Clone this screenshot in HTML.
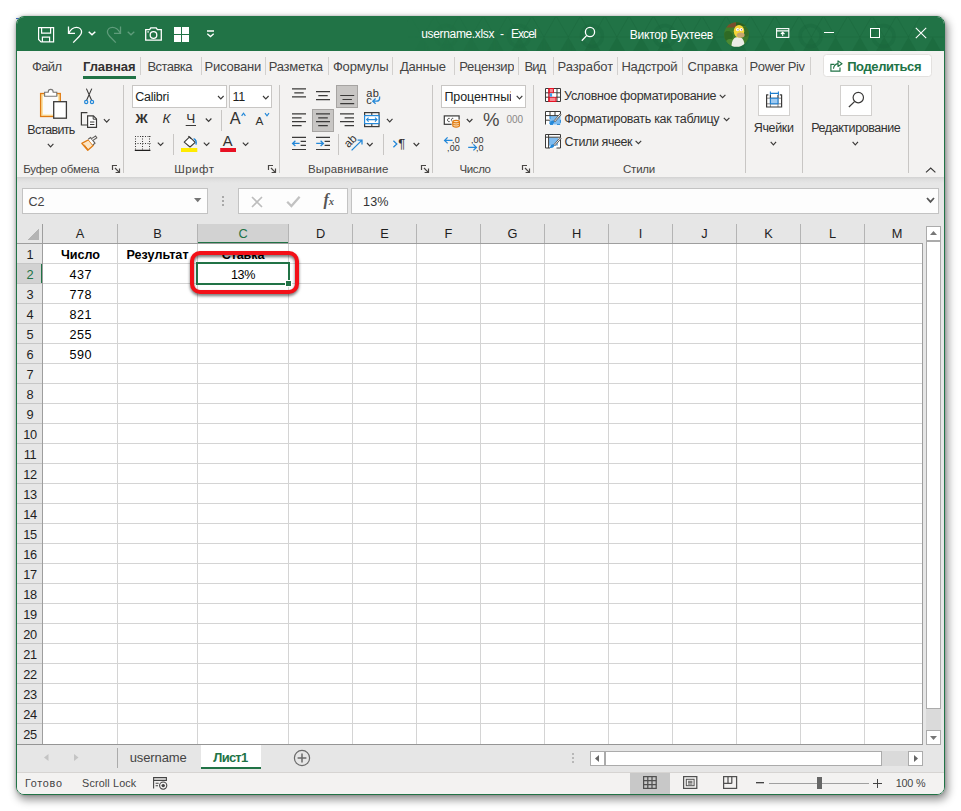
<!DOCTYPE html>
<html lang="ru">
<head>
<meta charset="utf-8">
<title>username.xlsx - Excel</title>
<style>
html,body{margin:0;padding:0;background:#fff;}
body{width:961px;height:811px;overflow:hidden;position:relative;font-family:"Liberation Sans",sans-serif;font-size:12px;color:#262626;}
#shadow{position:absolute;left:16px;top:16px;width:929px;height:779px;border-radius:8px;box-shadow:2px 4px 9px 1px rgba(0,0,0,.42), 0 0 3px rgba(0,0,0,.25);}
#win{position:absolute;left:16px;top:16px;width:929px;height:779px;box-sizing:border-box;border:1px solid #217346;border-radius:8px;overflow:hidden;background:#e6e6e6;}
#c{position:absolute;left:-17px;top:-17px;width:961px;height:811px;}
#c div,#c span,#c svg{position:absolute;}
.t{white-space:nowrap;line-height:16px;height:16px;}
/* title bar */
#title{left:16px;top:16px;width:929px;height:35px;background:#217346;}
/* tab row + ribbon */
#tabs{left:16px;top:51px;width:929px;height:29px;background:#f3f2f1;}
#ribbon{left:16px;top:80px;width:929px;height:97px;background:#f3f2f1;}
#ribshadow{left:16px;top:177px;width:929px;height:6px;background:linear-gradient(#d2d2d2,#dedede 40%,#e6e6e6);}
.tsep{width:1px;height:18px;top:57.3px;background:#d2d0ce;}
.gsep{width:1px;top:85px;height:88px;background:#c8c6c4;}
.ch,.rh{text-align:center;font-size:12.8px;height:16px;line-height:16px;}
.rh{letter-spacing:-0.4px;text-indent:0.8px;}
</style>
</head>
<body>
<div id="shadow"></div>
<div id="speck" style="position:absolute;left:16px;top:18px;width:3px;height:1px;background:#3a63b8;"></div>
<div id="win"><div id="c">

<!-- TITLE BAR -->
<div id="title"></div>
<!-- subtle pattern -->
<svg style="left:16px;top:16px;" width="929" height="35" viewBox="16 16 929 35">
<defs><linearGradient id="fd" x1="0" x2="1" y1="0" y2="0"><stop offset="0.42" stop-color="#fff" stop-opacity="0"/><stop offset="0.62" stop-color="#fff" stop-opacity="1"/></linearGradient><mask id="mk"><rect x="16" y="16" width="929" height="35" fill="url(#fd)"/></mask></defs>
<g mask="url(#mk)">
<path d="M908.5 37L920.6 58H896.4ZM884.2 37L896.4 58H872.1ZM859.9 37L872.0 58H847.8ZM835.6 37L847.8 58H823.5ZM811.3 37L823.4 58H799.1ZM787.0 37L799.1 58H774.9ZM762.7 37L774.9 58H750.6ZM738.4 37L750.5 58H726.2ZM714.1 37L726.2 58H702.0ZM689.8 37L701.9 58H677.6ZM665.5 37L677.6 58H653.4ZM641.2 37L653.4 58H629.1ZM616.9 37L629.0 58H604.8ZM592.6 37L604.7 58H580.4ZM568.3 37L580.4 58H556.1ZM544.0 37L556.1 58H531.9ZM519.7 37L531.9 58H507.6ZM495.4 37L507.5 58H483.2ZM471.1 37L483.2 58H458.9ZM446.8 37L458.9 58H434.7ZM422.5 37L434.6 58H410.4ZM398.2 37L410.3 58H386.1ZM932.8 37L945.0 58H920.6Z" fill="#1a663b" opacity=".55"/>
<path d="M908.5 37L896.4 16M908.5 37L920.6 16M884.2 37L872.1 16M884.2 37L896.4 16M859.9 37L847.8 16M859.9 37L872.0 16M835.6 37L823.5 16M835.6 37L847.8 16M811.3 37L799.1 16M811.3 37L823.4 16M787.0 37L774.9 16M787.0 37L799.1 16M762.7 37L750.6 16M762.7 37L774.9 16M738.4 37L726.2 16M738.4 37L750.5 16M714.1 37L702.0 16M714.1 37L726.2 16M689.8 37L677.6 16M689.8 37L701.9 16M665.5 37L653.4 16M665.5 37L677.6 16M641.2 37L629.1 16M641.2 37L653.4 16M616.9 37L604.8 16M616.9 37L629.0 16M592.6 37L580.4 16M592.6 37L604.7 16M568.3 37L556.1 16M568.3 37L580.4 16M544.0 37L531.9 16M544.0 37L556.1 16M519.7 37L507.6 16M519.7 37L531.9 16M495.4 37L483.2 16M495.4 37L507.5 16M471.1 37L458.9 16M471.1 37L483.2 16M446.8 37L434.7 16M446.8 37L458.9 16M422.5 37L410.4 16M422.5 37L434.6 16M398.2 37L386.1 16M398.2 37L410.3 16M380 37H945" fill="none" stroke="#1a663b" stroke-width="1" opacity=".45"/>
<circle cx="883.5" cy="36" r="10.5" fill="none" stroke="#1a663b" stroke-width="3.5" opacity=".4"/>
<circle cx="810.6" cy="36" r="10.5" fill="none" stroke="#1a663b" stroke-width="3.5" opacity=".4"/>
<circle cx="737.7" cy="36" r="10.5" fill="none" stroke="#1a663b" stroke-width="3.5" opacity=".4"/>
<circle cx="664.8" cy="36" r="10.5" fill="none" stroke="#1a663b" stroke-width="3.5" opacity=".4"/>
<circle cx="591.9" cy="36" r="10.5" fill="none" stroke="#1a663b" stroke-width="3.5" opacity=".4"/>
<circle cx="519.0" cy="36" r="10.5" fill="none" stroke="#1a663b" stroke-width="3.5" opacity=".4"/>
<circle cx="446.1" cy="36" r="10.5" fill="none" stroke="#1a663b" stroke-width="3.5" opacity=".4"/>
</g></svg>
<!-- save -->
<svg style="left:38px;top:27px;" width="17" height="16" fill="none" stroke="#fff" stroke-width="1.2"><path d="M0.6 0.6H15.6V14.9H3L0.6 12.5Z"/><path d="M3.6 0.6V6.2H12.6V0.6"/><path d="M4.4 14.9V10.2H11.6V14.9"/></svg>
<!-- undo -->
<svg style="left:66px;top:25px;" width="18" height="19" fill="none" stroke="#fff" stroke-width="1.3"><path d="M2.5 1.5V8.3H9"/><path d="M2.7 8.1C4.5 4.8 7.5 2.4 10.5 2.4C14 2.4 15.6 4.8 15.6 7C15.6 9 14.5 10.2 13.2 11.5L7.2 17.6"/></svg>
<svg style="left:88px;top:31px;" width="8" height="5" fill="none" stroke="#fff" stroke-width="1.5"><path d="M0.7 0.8L4 3.8L7.3 0.8"/></svg>
<!-- redo (dim) -->
<svg style="left:105px;top:25px;" width="18" height="19" fill="none" stroke="#5f9c7b" stroke-width="1.3"><path d="M15.5 1.5V8.3H9"/><path d="M15.3 8.1C13.5 4.8 10.5 2.4 7.5 2.4C4 2.4 2.4 4.8 2.4 7C2.4 9 3.5 10.2 4.8 11.5L10.8 17.6"/></svg>
<svg style="left:127px;top:31px;" width="8" height="5" fill="none" stroke="#5f9c7b" stroke-width="1.3"><path d="M0.7 0.8L4 3.8L7.3 0.8"/></svg>
<!-- camera -->
<svg style="left:145px;top:27px;" width="17" height="14" fill="none" stroke="#fff" stroke-width="1.3"><path d="M0.7 2.6H4.6L5.8 0.8H11.2L12.4 2.6H16.3V13.2H0.7Z"/><circle cx="8.5" cy="8" r="3.3"/><rect x="2.4" y="4.2" width="1.4" height="1.4" fill="#fff" stroke="none"/></svg>
<!-- four squares -->
<svg style="left:174px;top:27px;" width="16" height="15" fill="#fff" shape-rendering="crispEdges"><rect x="0" y="0" width="7" height="7"/><rect x="8" y="0" width="7" height="7"/><rect x="0" y="8" width="7" height="7"/><rect x="8" y="8" width="7" height="7"/></svg>
<!-- customize -->
<svg style="left:206px;top:30px;" width="9" height="8" fill="none" stroke="#fff" stroke-width="1.3"><path d="M1 1H8"/><path d="M1.3 3.8L4.5 6.6L7.7 3.8"/></svg>
<span class="t" style="left:421.3px;top:26px;font-size:12px;color:#fff;letter-spacing:-0.35px;">username.xlsx</span>
<span class="t" style="left:500.1px;top:26px;font-size:12px;color:#fff;letter-spacing:0.8px;">-</span>
<span class="t" style="left:510.9px;top:26px;font-size:12px;color:#fff;letter-spacing:-0.89px;">Excel</span>
<!-- search -->
<svg style="left:581px;top:25.5px;" width="15" height="16" fill="none" stroke="#fff" stroke-width="1.3"><circle cx="9" cy="6" r="4.6"/><path d="M5.8 9.4L0.8 14.8"/></svg>
<span class="t" style="left:629.8px;top:26.5px;font-size:12px;color:#fff;letter-spacing:-0.25px;">Виктор Бухтеев</span>
<!-- avatar -->
<svg style="left:724px;top:21.6px;" width="25" height="25" viewBox="0 0 25 25"><defs><clipPath id="av"><circle cx="12.5" cy="12.5" r="12.3"/></clipPath></defs><g clip-path="url(#av)"><rect width="25" height="25" fill="#3f7d2c"/><circle cx="4" cy="14" r="5" fill="#2f6a24"/><circle cx="21" cy="10" r="5" fill="#356f27"/><circle cx="6" cy="21" r="4" fill="#4c8a33"/><rect x="2" y="0" width="10" height="5.5" fill="#7b4d2c"/><rect x="12" y="0" width="12" height="4" fill="#2c5f22"/><path d="M7.5 25C7.5 18 10 15 14 15C18.5 15 20.5 18 20.5 25Z" fill="#ecece6"/><ellipse cx="15" cy="9.2" rx="5.2" ry="6.3" fill="#f6d437"/><ellipse cx="16.6" cy="13" rx="4" ry="2.6" fill="#c8a56f"/><circle cx="13.6" cy="7.6" r="1.7" fill="#fff"/><circle cx="17.2" cy="7.6" r="1.7" fill="#fff"/><circle cx="14" cy="7.8" r=".5" fill="#222"/><circle cx="17.6" cy="7.8" r=".5" fill="#222"/></g></svg>
<!-- ribbon display -->
<svg style="left:776px;top:28px;" width="14" height="11" fill="none" stroke="#fff" stroke-width="1.1"><rect x="0.6" y="0.6" width="12.2" height="8.8"/><path d="M0.6 2.9H12.8"/><path d="M6.7 8V4.4M4.9 6L6.7 4.2L8.5 6"/></svg>
<!-- min / max / close -->
<div style="left:824px;top:32px;width:10px;height:1px;background:#fff;"></div>
<div style="left:870px;top:28px;width:10px;height:10px;box-sizing:border-box;border:1px solid #fff;"></div>
<svg style="left:915px;top:27px;" width="12" height="12" fill="none" stroke="#fff" stroke-width="1.1"><path d="M0.8 0.8L11.2 11.2M11.2 0.8L0.8 11.2"/></svg>

<!-- /TITLE BAR -->

<!-- TABS -->
<div id="tabs"></div>
<div style="left:83px;top:76px;width:53px;height:3px;background:#217346;"></div>
<div class="tsep" style="left:140px;"></div>
<div class="tsep" style="left:201px;"></div>
<div class="tsep" style="left:265px;"></div>
<div class="tsep" style="left:328px;"></div>
<div class="tsep" style="left:392px;"></div>
<div class="tsep" style="left:454px;"></div>
<div class="tsep" style="left:518px;"></div>
<div class="tsep" style="left:553px;"></div>
<div class="tsep" style="left:617px;"></div>
<div class="tsep" style="left:682px;"></div>
<div class="tsep" style="left:745px;"></div>
<div class="tsep" style="left:810px;"></div>
<div style="left:823px;top:54.4px;width:108.6px;height:23px;box-sizing:border-box;background:#fff;border:1px solid #e3e1df;border-radius:3.5px;"></div>
<svg style="left:830px;top:60px;" width="14" height="13" fill="none" stroke="#217346" stroke-width="1.15"><path d="M4.4 4.3H0.9V11.1H10V7.6"/><path d="M3.5 8.8C3.7 5.8 5.4 3.9 8.2 3.6"/><path d="M8 0.9L12 3.7L8 6.5Z" stroke-linejoin="round"/></svg>
<span class="t" style="left:32.0px;top:59px;font-size:13px;color:#444444;letter-spacing:-0.62px;">Файл</span>
<span class="t" style="left:83.0px;top:59px;font-size:13px;font-weight:bold;color:#323130;letter-spacing:-0.06px;">Главная</span>
<span class="t" style="left:147.5px;top:59px;font-size:13px;color:#444444;letter-spacing:-0.55px;">Вставка</span>
<span class="t" style="left:204.5px;top:59px;font-size:13px;color:#444444;letter-spacing:-0.21px;width:56.5px;overflow:hidden;">Рисование</span>
<span class="t" style="left:268.8px;top:59px;font-size:13px;color:#444444;letter-spacing:-0.27px;">Разметка</span>
<span class="t" style="left:332.9px;top:59px;font-size:13px;color:#444444;letter-spacing:-0.16px;">Формулы</span>
<span class="t" style="left:399.9px;top:59px;font-size:13px;color:#444444;letter-spacing:-0.17px;">Данные</span>
<span class="t" style="left:459.2px;top:59px;font-size:13px;color:#444444;letter-spacing:-0.31px;width:55px;overflow:hidden;">Рецензирование</span>
<span class="t" style="left:524.5px;top:59px;font-size:13px;color:#444444;letter-spacing:-0.92px;">Вид</span>
<span class="t" style="left:557.5px;top:59px;font-size:13px;color:#444444;letter-spacing:-0.06px;width:55.5px;overflow:hidden;">Разработчик</span>
<span class="t" style="left:621.5px;top:59px;font-size:13px;color:#444444;letter-spacing:-0.34px;width:56px;overflow:hidden;">Надстройки</span>
<span class="t" style="left:687.5px;top:59px;font-size:13px;color:#444444;letter-spacing:-0.07px;">Справка</span>
<span class="t" style="left:749.5px;top:59px;font-size:13px;color:#444444;letter-spacing:-0.37px;width:55.5px;overflow:hidden;">Power Pivot</span>
<span class="t" style="left:847.2px;top:59px;font-size:13px;font-weight:bold;color:#217346;letter-spacing:-0.41px;">Поделиться</span>
<!-- /TABS -->

<!-- RIBBON -->
<div id="ribbon"></div>
<div id="ribshadow"></div>
<div class="gsep" style="left:123px;"></div>
<div class="gsep" style="left:279px;"></div>
<div class="gsep" style="left:432px;"></div>
<div class="gsep" style="left:533px;"></div>
<div class="gsep" style="left:745px;"></div>
<div class="gsep" style="left:802px;"></div>
<div class="gsep" style="left:908px;"></div>
<svg style="left:0;top:0;" width="961" height="200"><rect x="40.6" y="93.5" width="19.7" height="23" fill="#fbe2a6" stroke="#e07b12" stroke-width="1.3"/><rect x="43" y="96" width="15" height="18.5" fill="#fbfbfb"/><path d="M44.6 96.3V92.2H48.2C48.2 88.4 53.2 88.4 53.2 92.2H56.8V96.3Z" fill="#fff" stroke="#797775" stroke-width="1.1"/><rect x="53.7" y="101.7" width="12.7" height="16.5" fill="#fff" stroke="#3b3a39" stroke-width="1.3"/><path d="M47.8 143.9L50.6 146.8L53.4 143.9" fill="none" stroke="#3b3a39" stroke-width="1.15"/><path d="M86.4 88.6L91.6 100.2M91.8 88.6L86.6 100.2" stroke="#3b3a39" stroke-width="1.1" fill="none"/><circle cx="86.2" cy="102" r="1.6" fill="none" stroke="#2488d8" stroke-width="1.2"/><circle cx="92" cy="102" r="1.6" fill="none" stroke="#2488d8" stroke-width="1.2"/><path d="M87.4 112.6H81.4V125H87" fill="none" stroke="#3b3a39" stroke-width="1.2"/><path d="M87.6 115.8H93.4L96.5 118.9V127.4H87.6Z" fill="#fff" stroke="#3b3a39" stroke-width="1.2"/><path d="M93.2 116V119.2H96.3M90 122H94.4M90 124.5H94.4" fill="none" stroke="#3b3a39" stroke-width="1"/><path d="M103.9 119.2L106.7 122.2L109.5 119.2" fill="none" stroke="#3b3a39" stroke-width="1.15"/><path d="M81.8 143.4L88.6 139.8L93.2 145.6L87.8 150.2Z" fill="#fde6c6" stroke="#e07b12" stroke-width="1.3" stroke-linejoin="round"/><path d="M84 144.5L88 149.5" stroke="#e07b12" stroke-width="1"/><path d="M88.2 139.2L90.6 137.6L95 143.2L92.8 145" fill="#fff" stroke="#605e5c" stroke-width="1.1"/><path d="M91.6 138.6L95.6 136L96.8 137.8L93 140.4" fill="#fff" stroke="#605e5c" stroke-width="1.1"/><path d="M112.5 170V165.5H117" fill="none" stroke="#484644" stroke-width="1.2"/><path d="M115 168L119.3 172.3M119.5 168.6V172.5H115.6" fill="none" stroke="#484644" stroke-width="1.2"/><rect x="132.5" y="85.5" width="94" height="22" fill="#fff" stroke="#c8c6c4" stroke-width="1"/><rect x="229.5" y="85.5" width="42" height="22" fill="#fff" stroke="#c8c6c4" stroke-width="1"/><path d="M218.0 96.0L220.8 98.9L223.6 96.0" fill="none" stroke="#3b3a39" stroke-width="1.15"/><path d="M263.0 96.0L265.8 98.9L268.6 96.0" fill="none" stroke="#3b3a39" stroke-width="1.15"/><path d="M185.7 125.5H196" stroke="#3b3a39" stroke-width="1.1"/><path d="M205.8 118.5L208.6 121.5L211.4 118.5" fill="none" stroke="#3b3a39" stroke-width="1.15"/><rect x="221" y="110" width="1" height="21" fill="#c8c6c4"/><path d="M241.6 115.8L243.5 113.2L245.4 115.8" fill="none" stroke="#2488d8" stroke-width="1.2"/><path d="M265 113.2L267 115.8L269 113.2" fill="none" stroke="#2488d8" stroke-width="1.2"/><g stroke="#3b3a39" stroke-width="1" stroke-dasharray="1 1.5" fill="none"><path d="M135 136.5H150.5M135 143.5H150.5M135.5 136V150M142.5 136V150M149.5 136V150"/></g><path d="M134.8 150.4H150.4" stroke="#201f1e" stroke-width="1.4"/><path d="M157.8 142.6L160.6 145.5L163.4 142.6" fill="none" stroke="#3b3a39" stroke-width="1.15"/><rect x="173" y="134" width="1" height="21" fill="#c8c6c4"/><path d="M184.2 142.2L189.6 136.8L195.2 142.4L190 147Z" fill="#fff" stroke="#3b3a39" stroke-width="1.1" stroke-linejoin="round"/><path d="M188.4 136.2L190.8 138.6" stroke="#3b3a39" stroke-width="1.1"/><path d="M193.6 138.6C195.8 139.6 196.6 142 196 144.6" fill="none" stroke="#2488d8" stroke-width="1.4"/><rect x="181" y="148" width="16.3" height="4" fill="#ffeb00"/><path d="M203.8 142.6L206.6 145.5L209.4 142.6" fill="none" stroke="#3b3a39" stroke-width="1.15"/><rect x="220.2" y="148" width="15.8" height="4" fill="#e81123"/><path d="M242.8 142.6L245.6 145.5L248.4 142.6" fill="none" stroke="#3b3a39" stroke-width="1.15"/><path d="M268.5 170V165.5H273" fill="none" stroke="#484644" stroke-width="1.2"/><path d="M271 168L275.3 172.3M275.5 168.6V172.5H271.6" fill="none" stroke="#484644" stroke-width="1.2"/></svg>
<span class="t" style="left:27.3px;top:122px;font-size:12.5px;color:#323130;letter-spacing:-0.73px;">Вставить</span>
<span class="t" style="left:23.2px;top:161px;font-size:11.5px;color:#484644;letter-spacing:-0.17px;">Буфер обмена</span>
<span class="t" style="left:174.2px;top:161px;font-size:11.5px;color:#484644;letter-spacing:0.48px;">Шрифт</span>
<span class="t" style="left:135.3px;top:89px;font-size:12.5px;color:#201f1e;letter-spacing:-0.24px;">Calibri</span>
<span class="t" style="left:232.4px;top:89px;font-size:12.5px;color:#201f1e;letter-spacing:-0.28px;">11</span>
<span class="t" style="left:135.5px;top:110.5px;font-size:13.5px;font-weight:bold;color:#323130;letter-spacing:3.0px;">Ж</span>
<span class="t" style="left:162.4px;top:110.5px;font-size:13.5px;font-style:italic;color:#323130;letter-spacing:1.13px;">К</span>
<span class="t" style="left:186.3px;top:110.5px;font-size:13.5px;color:#323130;letter-spacing:0.4px;">Ч</span>
<span class="t" style="left:229.7px;top:109.5px;font-size:16.3px;color:#323130;letter-spacing:1.23px;">A</span>
<span class="t" style="left:255.5px;top:113px;font-size:11.8px;color:#323130;letter-spacing:1.82px;">A</span>
<span class="t" style="left:222.7px;top:133px;font-size:14.7px;color:#323130;letter-spacing:1.2px;">A</span>
<!-- /RIBBON -->
<!-- RIB2 -->
<svg style="left:0;top:0;" width="961" height="200"><rect x="336.5" y="85.5" width="21" height="22" fill="#c8c6c4" stroke="#a6a4a2" stroke-width="1"/><rect x="312.5" y="109.5" width="21" height="22" fill="#c8c6c4" stroke="#a6a4a2" stroke-width="1"/><path d="M292.0 88.9H306.0M294.3 92.9H303.7M292.0 96.9H306.0" stroke="#3b3a39" stroke-width="1.2" fill="none"/><path d="M316.0 91.7H330.0M318.3 95.7H327.7M316.0 99.7H330.0" stroke="#3b3a39" stroke-width="1.2" fill="none"/><path d="M340.2 95.5H354.2M342.5 99.5H351.9M340.2 103.6H354.2" stroke="#3b3a39" stroke-width="1.2" fill="none"/><path d="M379.6 96.6V98.2C379.6 100.4 378.4 101.2 376.6 101.2H373.2M375.6 98.6L372.8 101.2L375.6 103.8" fill="none" stroke="#2488d8" stroke-width="1.3"/><path d="M292.0 113.8H306.0M292.0 117.8H301.6M292.0 121.7H306.0M292.0 125.7H301.6" stroke="#3b3a39" stroke-width="1.2" fill="none"/><path d="M316.0 113.8H330.0M318.2 117.8H327.8M316.0 121.7H330.0M318.2 125.7H327.8" stroke="#3b3a39" stroke-width="1.2" fill="none"/><path d="M340.0 113.8H354.0M344.6 117.8H354.0M340.0 121.7H354.0M344.6 125.7H354.0" stroke="#3b3a39" stroke-width="1.2" fill="none"/><rect x="364.6" y="112.6" width="14.4" height="14" fill="none" stroke="#3b3a39" stroke-width="1.2"/><path d="M371.8 112.6V115.4M371.8 123.8V126.6" stroke="#3b3a39" stroke-width="1.1"/><rect x="364.6" y="115.6" width="14.4" height="8" fill="#fff" stroke="#2488d8" stroke-width="1.2"/><path d="M366.6 119.6H377M368.6 117.6L366.6 119.6L368.6 121.6M375 117.6L377 119.6L375 121.6" fill="none" stroke="#2488d8" stroke-width="1.1"/><path d="M386.9 118.8L389.7 121.8L392.5 118.8" fill="none" stroke="#3b3a39" stroke-width="1.15"/><path d="M292.0 137.4H306.0M300.6 141.4H306.0M300.6 145.4H306.0M292.0 149.5H306.0" stroke="#3b3a39" stroke-width="1.2" fill="none"/><path d="M292.6 143.4H299.6M295.4 140.8L292.6 143.4L295.4 146" fill="none" stroke="#2488d8" stroke-width="1.3"/><path d="M316.0 137.4H330.0M324.6 141.4H330.0M324.6 145.4H330.0M316.0 149.5H330.0" stroke="#3b3a39" stroke-width="1.2" fill="none"/><path d="M316.2 143.4H323.4M320.6 140.8L323.4 143.4L320.6 146" fill="none" stroke="#2488d8" stroke-width="1.3"/><rect x="338" y="134" width="1" height="21" fill="#c8c6c4"/><path d="M351.6 150.4L361.8 140.4M357.6 140.2H362V144.6" fill="none" stroke="#2488d8" stroke-width="1.3"/><path d="M367.0 143.0L369.8 145.9L372.6 143.0" fill="none" stroke="#3b3a39" stroke-width="1.15"/><rect x="383" y="134" width="1" height="21" fill="#c8c6c4"/><path d="M393.4 140.8L396.8 144L393.4 147.2" fill="none" stroke="#2488d8" stroke-width="1.3"/><path d="M413.6 143.0L416.4 145.9L419.2 143.0" fill="none" stroke="#3b3a39" stroke-width="1.15"/><path d="M421.5 170V165.5H426" fill="none" stroke="#484644" stroke-width="1.2"/><path d="M424 168L428.3 172.3M428.5 168.6V172.5H424.6" fill="none" stroke="#484644" stroke-width="1.2"/><rect x="441.5" y="85.5" width="84" height="22" fill="#fff" stroke="#c8c6c4" stroke-width="1"/><path d="M516.7 95.8L519.5 98.8L522.3 95.8" fill="none" stroke="#3b3a39" stroke-width="1.15"/><rect x="444.3" y="115.9" width="14.8" height="8.4" fill="#fff" stroke="#3b3a39" stroke-width="1.2"/><path d="M449.6 118.4C447.2 117.6 446.6 122.2 449.6 121.6M453.2 118.4C451 117.6 450.6 122.2 453.2 121.6" fill="none" stroke="#3b3a39" stroke-width="1"/><rect x="451.6" y="119.6" width="9" height="8.4" fill="#f3f2f1"/><path d="M452.8 121.8V125.6C452.8 127.6 459.4 127.6 459.4 125.6V121.8" fill="#fde6c6" stroke="#e07b12" stroke-width="1.2"/><ellipse cx="456.1" cy="121.6" rx="3.3" ry="1.3" fill="#fde6c6" stroke="#e07b12" stroke-width="1.2"/><path d="M452.8 123.8C453.4 125.4 458.8 125.4 459.4 123.8" fill="none" stroke="#e07b12" stroke-width="1"/><path d="M466.8 119.0L469.6 121.9L472.4 119.0" fill="none" stroke="#3b3a39" stroke-width="1.15"/><path d="M444.6 140.4H452.6M447.6 137.4L444.6 140.4L447.6 143.4" fill="none" stroke="#2488d8" stroke-width="1.3"/><path d="M468.2 147.4H476.4M473.4 144.4L476.4 147.4L473.4 150.4" fill="none" stroke="#2488d8" stroke-width="1.3"/><path d="M522.5 170V165.5H527" fill="none" stroke="#484644" stroke-width="1.2"/><path d="M525 168L529.3 172.3M529.5 168.6V172.5H525.6" fill="none" stroke="#484644" stroke-width="1.2"/></svg>
<span class="t" style="left:366.3px;top:85.3px;font-size:11px;color:#323130;letter-spacing:0.45px;">ab</span>
<span class="t" style="left:366.3px;top:92.3px;font-size:11px;color:#323130;letter-spacing:-0.1px;">c</span>
<span class="t" style="left:398.3px;top:135.8px;font-size:13px;color:#323130;letter-spacing:0.42px;">¶</span>
<span class="t" style="left:308.0px;top:161px;font-size:11.5px;color:#484644;letter-spacing:0.12px;">Выравнивание</span>
<span class="t" style="left:444.4px;top:89px;font-size:12.5px;color:#201f1e;letter-spacing:-0.08px;width:66.5px;overflow:hidden;">Процентный</span>
<span class="t" style="left:483.1px;top:111.5px;font-size:18.5px;color:#4a4846;letter-spacing:-0.45px;">%</span>
<span class="t" style="left:506.4px;top:111.8px;font-size:10px;color:#8a8886;letter-spacing:0.01px;">000</span>
<span class="t" style="left:452.1px;top:131.7px;font-size:9px;color:#323130;letter-spacing:0.08px;">,0</span>
<span class="t" style="left:447.1px;top:139.7px;font-size:9px;color:#323130;letter-spacing:0.04px;">,00</span>
<span class="t" style="left:470.9px;top:131.7px;font-size:9px;color:#323130;letter-spacing:0.04px;">,00</span>
<span class="t" style="left:476.1px;top:139.7px;font-size:9px;color:#323130;letter-spacing:-0.12px;">,0</span>
<span class="t" style="left:459.5px;top:161px;font-size:11.5px;color:#484644;letter-spacing:-0.39px;">Число</span>
<span class="t" style="left:344.4px;top:133.4px;font-size:11.5px;color:#323130;transform:rotate(-45deg);transform-origin:50% 50%;letter-spacing:-0.3px;">ab</span>
<!-- /RIB2 -->
<!-- RIB3 -->
<svg style="left:0;top:0;" width="961" height="200"><rect x="545.5" y="88.5" width="15" height="13" fill="#fff"/><path d="M545.5 88.5H560.5V101.5H545.5ZM545.5 92.8H560.5M545.5 97.2H560.5M549 88.5V101.5M553 88.5V101.5M557 88.5V101.5" fill="none" stroke="#3b3a39" stroke-width="1"/><rect x="549" y="88.5" width="4.4" height="4.3" fill="#f58a93" stroke="#e81123" stroke-width="1"/><rect x="549" y="97.2" width="7" height="4.3" fill="#f58a93" stroke="#e81123" stroke-width="1"/><rect x="549.5" y="93.3" width="6.5" height="3.4" fill="#fff"/><rect x="549.5" y="93.3" width="2.6" height="3.4" fill="#3d9be9"/><path d="M549 88.5V101.5" stroke="#e81123" stroke-width="1"/><rect x="545.5" y="111.5" width="15" height="13" fill="#fff"/><rect x="550" y="116" width="10.5" height="8.5" fill="#7fbcf0"/><path d="M545.5 124.5V111.5H560.5V114M545.5 115.6H560.5M545.5 120.2H550M550 111.5V116M555 111.5V116" fill="none" stroke="#3b3a39" stroke-width="1"/><path d="M550 116V124.4M550 124.4H553M557 124.4H560.4V118" fill="none" stroke="#2488d8" stroke-width="1" stroke-dasharray="3 2"/><path d="M550.2 123.0C551.4 120.19999999999999 553 120.0 554.4 121.19999999999999C554.4 123.6 552.2 124.6 549.4 124.0Z" fill="#2488d8"/><path d="M554 120.8L560 113.8L561 114.8L555 121.8Z" fill="#fff" stroke="#605e5c" stroke-width="1"/><rect x="545.5" y="134.5" width="15" height="13.5" fill="#fff"/><rect x="549" y="137.6" width="9" height="8" fill="#7fbcf0"/><path d="M545.5 148V134.5H560.5V148M545.5 137.2H560.5M548.6 134.5V148M545.5 148H550M556.5 148H560.5" fill="none" stroke="#3b3a39" stroke-width="1"/><path d="M550.2 146.8C551.4 144.0 553 143.8 554.4 145.0C554.4 147.4 552.2 148.4 549.4 147.8Z" fill="#2488d8"/><path d="M554 144.6L560 137.6L561 138.6L555 145.6Z" fill="#fff" stroke="#605e5c" stroke-width="1"/><path d="M719.8 94.8L722.6 97.7L725.4 94.8" fill="none" stroke="#3b3a39" stroke-width="1.15"/><path d="M723.8 117.8L726.6 120.7L729.4 117.8" fill="none" stroke="#3b3a39" stroke-width="1.15"/><path d="M635.6 140.8L638.4 143.7L641.2 140.8" fill="none" stroke="#3b3a39" stroke-width="1.15"/><rect x="758.5" y="85.5" width="31" height="30" fill="#fff" stroke="#d2d0ce" stroke-width="1"/><path d="M766.6 98.2H781.6M766.6 103.8H781.6M770.4 98V107M778 98V107" fill="none" stroke="#8a8886" stroke-width="1"/><path d="M766.6 94.4V107H781.6V94.4M766.4 94.8H768.4M779.8 94.8H781.8M770.4 95V98M778 95V98" fill="none" stroke="#3b3a39" stroke-width="1.2"/><rect x="770.4" y="98.2" width="7.6" height="5.6" fill="#9fcaf1" stroke="#1e7fd0" stroke-width="1.1"/><path d="M770.4 93.4H778.4M770.4 91.6V95.2M778.4 91.6V95.2" fill="none" stroke="#1e7fd0" stroke-width="1.1"/><path d="M770.7 141.9L773.4 144.9L776.1 141.9" fill="none" stroke="#3b3a39" stroke-width="1.15"/><rect x="840.5" y="85.5" width="31" height="30" fill="#fff" stroke="#d2d0ce" stroke-width="1"/><circle cx="858.3" cy="97.6" r="5.2" fill="none" stroke="#3b3a39" stroke-width="1.2"/><path d="M854.5 101.6L848.9 107" stroke="#3b3a39" stroke-width="1.3"/><path d="M852.6 141.9L855.3 144.9L858.0 141.9" fill="none" stroke="#3b3a39" stroke-width="1.15"/><path d="M926 172.4L930.7 168L935.4 172.4" fill="none" stroke="#3b3a39" stroke-width="1.2"/></svg>
<span class="t" style="left:564.1px;top:88px;font-size:12.5px;color:#323130;letter-spacing:-0.3px;">Условное форматирование</span>
<span class="t" style="left:564.3px;top:111px;font-size:12.5px;color:#323130;letter-spacing:-0.31px;">Форматировать как таблицу</span>
<span class="t" style="left:564.5px;top:134px;font-size:12.5px;color:#323130;letter-spacing:-0.41px;">Стили ячеек</span>
<span class="t" style="left:623.0px;top:161px;font-size:11.5px;color:#484644;letter-spacing:-0.22px;">Стили</span>
<span class="t" style="left:753.7px;top:120.3px;font-size:12.5px;color:#323130;letter-spacing:-0.33px;">Ячейки</span>
<span class="t" style="left:811.2px;top:120.3px;font-size:12.5px;color:#323130;letter-spacing:-0.44px;">Редактирование</span>
<!-- /RIB3 -->

<!-- FORMULA BAR -->
<div style="left:22px;top:188px;width:186px;height:26px;box-sizing:border-box;background:#fdfdfd;border:1px solid #c3c3c3;"></div>
<svg style="left:193.8px;top:198px;" width="8" height="5"><path d="M0 0H7.4L3.7 4.2Z" fill="#757575"/></svg>
<svg style="left:222px;top:196px;" width="3" height="12"><rect x="0" y="0" width="2" height="2" fill="#a8a8a8"/><rect x="0" y="4" width="2" height="2" fill="#a8a8a8"/><rect x="0" y="8" width="2" height="2" fill="#a8a8a8"/></svg>
<div style="left:238px;top:188px;width:110px;height:26px;box-sizing:border-box;background:#fdfdfd;border:1px solid #c3c3c3;"></div>
<svg style="left:251px;top:196px;" width="12" height="12"><path d="M1 1L11 11M11 1L1 11" stroke="#bdbdbd" stroke-width="1.6" fill="none"/></svg>
<svg style="left:286px;top:195px;" width="15" height="13"><path d="M1.2 6.8L5.4 11L13.6 1.8" stroke="#c2c2c2" stroke-width="2.3" fill="none"/></svg>
<span class="t" style="left:323.5px;top:192px;font-family:'Liberation Serif',serif;font-style:italic;font-size:16px;color:#555;font-weight:bold;">f<span style="position:static;font-size:10.5px;font-weight:bold;letter-spacing:0;">x</span></span>
<div style="left:351px;top:188px;width:588px;height:26px;box-sizing:border-box;background:#fdfdfd;border:1px solid #c3c3c3;"></div>
<svg style="left:926px;top:197px;" width="9" height="7"><path d="M1 1L4.5 4.8L8 1" stroke="#555" stroke-width="1.8" fill="none"/></svg>
<span class="t" style="left:28.6px;top:193.5px;font-size:12.6px;color:#444;letter-spacing:-0.11px;">C2</span>
<span class="t" style="left:363.0px;top:193.5px;font-size:12.6px;color:#333;letter-spacing:0.14px;">13%</span>
<!-- /FORMULA BAR -->

<!-- GRID -->
<div id="sheet" style="left:17px;top:224px;width:906px;height:521px;background:#fff;"></div>
<div style="left:17px;top:224px;width:906px;height:19px;background:#e6e6e6;"></div>
<div style="left:17px;top:244px;width:25px;height:501px;background:#e6e6e6;"></div>
<div style="left:198px;top:224px;width:90px;height:18px;background:#d2d2d2;border-bottom:2px solid #217346;"></div>
<div style="left:17px;top:264px;width:24px;height:19px;background:#d2d2d2;border-right:2px solid #217346;"></div>
<svg style="left:0;top:0;" width="961" height="811" shape-rendering="crispEdges"><rect x="43" y="263" width="880" height="1" fill="#d4d4d4"/><rect x="17" y="263" width="25" height="1" fill="#c6c6c6"/><rect x="43" y="283" width="880" height="1" fill="#d4d4d4"/><rect x="17" y="283" width="25" height="1" fill="#c6c6c6"/><rect x="43" y="303" width="880" height="1" fill="#d4d4d4"/><rect x="17" y="303" width="25" height="1" fill="#c6c6c6"/><rect x="43" y="323" width="880" height="1" fill="#d4d4d4"/><rect x="17" y="323" width="25" height="1" fill="#c6c6c6"/><rect x="43" y="343" width="880" height="1" fill="#d4d4d4"/><rect x="17" y="343" width="25" height="1" fill="#c6c6c6"/><rect x="43" y="363" width="880" height="1" fill="#d4d4d4"/><rect x="17" y="363" width="25" height="1" fill="#c6c6c6"/><rect x="43" y="383" width="880" height="1" fill="#d4d4d4"/><rect x="17" y="383" width="25" height="1" fill="#c6c6c6"/><rect x="43" y="403" width="880" height="1" fill="#d4d4d4"/><rect x="17" y="403" width="25" height="1" fill="#c6c6c6"/><rect x="43" y="423" width="880" height="1" fill="#d4d4d4"/><rect x="17" y="423" width="25" height="1" fill="#c6c6c6"/><rect x="43" y="443" width="880" height="1" fill="#d4d4d4"/><rect x="17" y="443" width="25" height="1" fill="#c6c6c6"/><rect x="43" y="463" width="880" height="1" fill="#d4d4d4"/><rect x="17" y="463" width="25" height="1" fill="#c6c6c6"/><rect x="43" y="483" width="880" height="1" fill="#d4d4d4"/><rect x="17" y="483" width="25" height="1" fill="#c6c6c6"/><rect x="43" y="503" width="880" height="1" fill="#d4d4d4"/><rect x="17" y="503" width="25" height="1" fill="#c6c6c6"/><rect x="43" y="523" width="880" height="1" fill="#d4d4d4"/><rect x="17" y="523" width="25" height="1" fill="#c6c6c6"/><rect x="43" y="543" width="880" height="1" fill="#d4d4d4"/><rect x="17" y="543" width="25" height="1" fill="#c6c6c6"/><rect x="43" y="563" width="880" height="1" fill="#d4d4d4"/><rect x="17" y="563" width="25" height="1" fill="#c6c6c6"/><rect x="43" y="583" width="880" height="1" fill="#d4d4d4"/><rect x="17" y="583" width="25" height="1" fill="#c6c6c6"/><rect x="43" y="603" width="880" height="1" fill="#d4d4d4"/><rect x="17" y="603" width="25" height="1" fill="#c6c6c6"/><rect x="43" y="623" width="880" height="1" fill="#d4d4d4"/><rect x="17" y="623" width="25" height="1" fill="#c6c6c6"/><rect x="43" y="643" width="880" height="1" fill="#d4d4d4"/><rect x="17" y="643" width="25" height="1" fill="#c6c6c6"/><rect x="43" y="663" width="880" height="1" fill="#d4d4d4"/><rect x="17" y="663" width="25" height="1" fill="#c6c6c6"/><rect x="43" y="683" width="880" height="1" fill="#d4d4d4"/><rect x="17" y="683" width="25" height="1" fill="#c6c6c6"/><rect x="43" y="703" width="880" height="1" fill="#d4d4d4"/><rect x="17" y="703" width="25" height="1" fill="#c6c6c6"/><rect x="43" y="723" width="880" height="1" fill="#d4d4d4"/><rect x="17" y="723" width="25" height="1" fill="#c6c6c6"/><rect x="117" y="244" width="1" height="501" fill="#d4d4d4"/><rect x="117" y="224" width="1" height="19" fill="#b4b4b4"/><rect x="197" y="244" width="1" height="501" fill="#d4d4d4"/><rect x="197" y="224" width="1" height="19" fill="#b4b4b4"/><rect x="288" y="244" width="1" height="501" fill="#d4d4d4"/><rect x="288" y="224" width="1" height="19" fill="#b4b4b4"/><rect x="352" y="244" width="1" height="501" fill="#d4d4d4"/><rect x="352" y="224" width="1" height="19" fill="#b4b4b4"/><rect x="416" y="244" width="1" height="501" fill="#d4d4d4"/><rect x="416" y="224" width="1" height="19" fill="#b4b4b4"/><rect x="480" y="244" width="1" height="501" fill="#d4d4d4"/><rect x="480" y="224" width="1" height="19" fill="#b4b4b4"/><rect x="544" y="244" width="1" height="501" fill="#d4d4d4"/><rect x="544" y="224" width="1" height="19" fill="#b4b4b4"/><rect x="608" y="244" width="1" height="501" fill="#d4d4d4"/><rect x="608" y="224" width="1" height="19" fill="#b4b4b4"/><rect x="672" y="244" width="1" height="501" fill="#d4d4d4"/><rect x="672" y="224" width="1" height="19" fill="#b4b4b4"/><rect x="736" y="244" width="1" height="501" fill="#d4d4d4"/><rect x="736" y="224" width="1" height="19" fill="#b4b4b4"/><rect x="800" y="244" width="1" height="501" fill="#d4d4d4"/><rect x="800" y="224" width="1" height="19" fill="#b4b4b4"/><rect x="864" y="244" width="1" height="501" fill="#d4d4d4"/><rect x="864" y="224" width="1" height="19" fill="#b4b4b4"/><rect x="42" y="224" width="1" height="521" fill="#9e9e9e"/><rect x="17" y="243" width="906" height="1" fill="#9e9e9e"/><rect x="922" y="243" width="1" height="502" fill="#9e9e9e"/><rect x="17" y="744" width="906" height="1" fill="#959595"/><path d="M39 228 L39 240 L27 240 Z" fill="#b4b4b4"/></svg>
<span class="t ch" style="left:43px;width:74px;top:226px;color:#1f1f1f">A</span>
<span class="t ch" style="left:118px;width:79px;top:226px;color:#1f1f1f">B</span>
<span class="t ch" style="left:198px;width:90px;top:226px;color:#217346">C</span>
<span class="t ch" style="left:289px;width:63px;top:226px;color:#1f1f1f">D</span>
<span class="t ch" style="left:353px;width:63px;top:226px;color:#1f1f1f">E</span>
<span class="t ch" style="left:417px;width:63px;top:226px;color:#1f1f1f">F</span>
<span class="t ch" style="left:481px;width:63px;top:226px;color:#1f1f1f">G</span>
<span class="t ch" style="left:545px;width:63px;top:226px;color:#1f1f1f">H</span>
<span class="t ch" style="left:609px;width:63px;top:226px;color:#1f1f1f">I</span>
<span class="t ch" style="left:673px;width:63px;top:226px;color:#1f1f1f">J</span>
<span class="t ch" style="left:737px;width:63px;top:226px;color:#1f1f1f">K</span>
<span class="t ch" style="left:801px;width:63px;top:226px;color:#1f1f1f">L</span>
<span class="t ch" style="left:865px;width:64px;top:226px;color:#1f1f1f">M</span>
<span class="t rh" style="left:17px;width:25px;top:246.5px;color:#1f1f1f">1</span>
<span class="t rh" style="left:17px;width:25px;top:266.5px;color:#217346">2</span>
<span class="t rh" style="left:17px;width:25px;top:286.5px;color:#1f1f1f">3</span>
<span class="t rh" style="left:17px;width:25px;top:306.5px;color:#1f1f1f">4</span>
<span class="t rh" style="left:17px;width:25px;top:326.5px;color:#1f1f1f">5</span>
<span class="t rh" style="left:17px;width:25px;top:346.5px;color:#1f1f1f">6</span>
<span class="t rh" style="left:17px;width:25px;top:366.5px;color:#1f1f1f">7</span>
<span class="t rh" style="left:17px;width:25px;top:386.5px;color:#1f1f1f">8</span>
<span class="t rh" style="left:17px;width:25px;top:406.5px;color:#1f1f1f">9</span>
<span class="t rh" style="left:17px;width:25px;top:426.5px;color:#1f1f1f">10</span>
<span class="t rh" style="left:17px;width:25px;top:446.5px;color:#1f1f1f">11</span>
<span class="t rh" style="left:17px;width:25px;top:466.5px;color:#1f1f1f">12</span>
<span class="t rh" style="left:17px;width:25px;top:486.5px;color:#1f1f1f">13</span>
<span class="t rh" style="left:17px;width:25px;top:506.5px;color:#1f1f1f">14</span>
<span class="t rh" style="left:17px;width:25px;top:526.5px;color:#1f1f1f">15</span>
<span class="t rh" style="left:17px;width:25px;top:546.5px;color:#1f1f1f">16</span>
<span class="t rh" style="left:17px;width:25px;top:566.5px;color:#1f1f1f">17</span>
<span class="t rh" style="left:17px;width:25px;top:586.5px;color:#1f1f1f">18</span>
<span class="t rh" style="left:17px;width:25px;top:606.5px;color:#1f1f1f">19</span>
<span class="t rh" style="left:17px;width:25px;top:626.5px;color:#1f1f1f">20</span>
<span class="t rh" style="left:17px;width:25px;top:646.5px;color:#1f1f1f">21</span>
<span class="t rh" style="left:17px;width:25px;top:666.5px;color:#1f1f1f">22</span>
<span class="t rh" style="left:17px;width:25px;top:686.5px;color:#1f1f1f">23</span>
<span class="t rh" style="left:17px;width:25px;top:706.5px;color:#1f1f1f">24</span>
<span class="t rh" style="left:17px;width:25px;top:726.5px;color:#1f1f1f">25</span>
<span class="t" style="left:61.1px;top:246.5px;font-size:12.6px;font-weight:bold;color:#000;letter-spacing:-0.08px;">Число</span>
<span class="t" style="left:126.4px;top:246.5px;font-size:12.6px;font-weight:bold;color:#000;letter-spacing:0.04px;">Результат</span>
<span class="t" style="left:221.7px;top:246.5px;font-size:12.6px;font-weight:bold;color:#000;letter-spacing:-0.11px;">Ставка</span>
<span class="t" style="left:69.5px;top:266.5px;font-size:12.6px;color:#000;letter-spacing:0.49px;">437</span>
<span class="t" style="left:69.5px;top:286.5px;font-size:12.6px;color:#000;letter-spacing:0.49px;">778</span>
<span class="t" style="left:69.5px;top:306.5px;font-size:12.6px;color:#000;letter-spacing:0.49px;">821</span>
<span class="t" style="left:69.5px;top:326.5px;font-size:12.6px;color:#000;letter-spacing:0.49px;">255</span>
<span class="t" style="left:69.5px;top:346.5px;font-size:12.6px;color:#000;letter-spacing:0.49px;">590</span>
<span class="t" style="left:230.9px;top:266.5px;font-size:12.6px;color:#000;letter-spacing:-0.31px;">13%</span>
<!-- /GRID -->

<!-- SEL -->
<div id="selbox" style="left:196px;top:262px;width:94px;height:23px;box-sizing:border-box;border:2px solid #217346;"></div>
<div style="left:285px;top:280px;width:7px;height:7px;background:#fff;"></div>
<div style="left:286px;top:281px;width:5px;height:5px;background:#217346;"></div>
<div style="left:215px;top:246px;width:56px;height:5px;background:#fff;"></div>
<div id="redbox" style="left:189.7px;top:250.5px;width:109.6px;height:43px;box-sizing:border-box;border:4px solid #f31018;border-radius:10px;filter:drop-shadow(0.5px 2px 1.6px rgba(0,0,0,.55));"></div>

<!-- /SEL -->
<!-- SCROLL -->
<!-- vertical scrollbar -->
<div style="left:926px;top:226px;width:15px;height:519px;background:#dadada;"></div>
<div style="left:926px;top:226px;width:15px;height:15px;box-sizing:border-box;background:#fff;border:1px solid #ababab;"></div>
<svg style="left:930px;top:231px;" width="7" height="4"><path d="M0 4H7L3.5 0Z" fill="#777"/></svg>
<div style="left:926px;top:241px;width:15px;height:468px;box-sizing:border-box;background:#fff;border:1px solid #ababab;"></div>
<div style="left:926px;top:730px;width:15px;height:15px;box-sizing:border-box;background:#fff;border:1px solid #ababab;"></div>
<svg style="left:930px;top:736px;" width="7" height="4"><path d="M0 0H7L3.5 4Z" fill="#777"/></svg>

<!-- /SCROLL -->
<!-- SHEET TABS -->
<svg style="left:44px;top:754px;" width="5" height="7"><path d="M4.5 0V7L0 3.5Z" fill="#c4c4c4"/></svg>
<svg style="left:73.5px;top:754px;" width="5" height="7"><path d="M0 0V7L4.5 3.5Z" fill="#c4c4c4"/></svg>
<div style="left:117px;top:748px;width:1px;height:20px;background:#ababab;"></div>
<div style="left:201px;top:745px;width:60px;height:22px;background:#fff;border-bottom:2px solid #217346;"></div>
<svg style="left:293px;top:749px;" width="18" height="18"><circle cx="9" cy="9" r="7.6" fill="none" stroke="#6a6a6a" stroke-width="1.2"/><path d="M9 4.6V13.4M4.6 9H13.4" stroke="#6a6a6a" stroke-width="1.5"/></svg>
<svg style="left:572px;top:753px;" width="3" height="11"><rect x="0" y="0" width="2" height="2" fill="#b8b8b8"/><rect x="0" y="4" width="2" height="2" fill="#b8b8b8"/><rect x="0" y="8" width="2" height="2" fill="#b8b8b8"/></svg>
<div style="left:590px;top:751px;width:333px;height:15px;background:#dadada;"></div>
<div style="left:590px;top:751px;width:15px;height:15px;box-sizing:border-box;background:#fff;border:1px solid #ababab;"></div>
<svg style="left:595px;top:755px;" width="4" height="7"><path d="M4 0V7L0 3.5Z" fill="#666"/></svg>
<div style="left:605px;top:751px;width:277px;height:15px;box-sizing:border-box;background:#fff;border:1px solid #ababab;"></div>
<div style="left:908px;top:751px;width:15px;height:15px;box-sizing:border-box;background:#fff;border:1px solid #ababab;"></div>
<svg style="left:914px;top:755px;" width="4" height="7"><path d="M0 0V7L4 3.5Z" fill="#666"/></svg>
<span class="t" style="left:129.7px;top:750px;font-size:13px;color:#444;letter-spacing:-0.1px;">username</span>
<span class="t" style="left:213.3px;top:750px;font-size:13px;font-weight:bold;color:#217346;letter-spacing:-0.76px;">Лист1</span>
<!-- /SHEET TABS -->

<!-- STATUS BAR -->
<div style="left:16px;top:772px;width:929px;height:23px;background:#f3f2f1;border-top:1px solid #d6d4d2;box-sizing:border-box;"></div>
<svg style="left:153px;top:777px;" width="16" height="14" fill="none" stroke="#444" stroke-width="1.1"><path d="M0.6 11.5V0.6H13.4V4"/><path d="M0.6 3.4H13.4"/><path d="M2.6 6.2H5.6M2.6 8.8H5"/><circle cx="10.2" cy="8.6" r="3.6"/><circle cx="10.2" cy="8.6" r="1.7" fill="#444" stroke="none"/></svg>
<div style="left:630px;top:773px;width:40px;height:22px;background:#c8c8c8;"></div>
<svg style="left:643px;top:776px;" width="14" height="13" fill="none" stroke="#505050" stroke-width="1.25"><rect x="0.6" y="0.6" width="12.6" height="11.8"/><path d="M0.6 4.5H13.2M0.6 8.5H13.2M4.8 0.6V12.4M9 0.6V12.4"/></svg>
<svg style="left:683px;top:776px;" width="15" height="13" fill="none" stroke="#505050" stroke-width="1.25"><rect x="0.6" y="0.6" width="13.2" height="11.8"/><rect x="3.3" y="3.3" width="7.8" height="6.4" stroke-width="1"/><path d="M5 5.3H9.4M5 6.7H9.4M5 8.1H9.4" stroke-width="0.9"/></svg>
<svg style="left:723px;top:776px;" width="15" height="13" fill="none" stroke="#505050" stroke-width="1.25"><rect x="0.6" y="0.6" width="13" height="11.8"/><path d="M5 0.6V7.4M8.8 0.6V7.4M0.6 7.4H8.8"/></svg>
<div style="left:756px;top:782px;width:8px;height:1px;background:#444;box-shadow:0 1px 0 rgba(68,68,68,.35);"></div>
<div style="left:769px;top:783px;width:100px;height:1px;background:#a0a0a0;"></div>
<div style="left:817px;top:777px;width:5px;height:12px;background:#666;"></div>
<div style="left:873px;top:783px;width:9px;height:1px;background:#444;"></div>
<div style="left:877px;top:779px;width:1px;height:9px;background:#444;"></div>
<span class="t" style="left:24.9px;top:775.3px;font-size:10.8px;color:#444;letter-spacing:0.73px;">Готово</span>
<span class="t" style="left:82.1px;top:775.3px;font-size:10.8px;color:#444;letter-spacing:0.13px;">Scroll Lock</span>
<span class="t" style="left:895.8px;top:775.3px;font-size:10.8px;color:#444;letter-spacing:-0.23px;">100 %</span>
<!-- /STATUS BAR -->

</div></div>
</body>
</html>
